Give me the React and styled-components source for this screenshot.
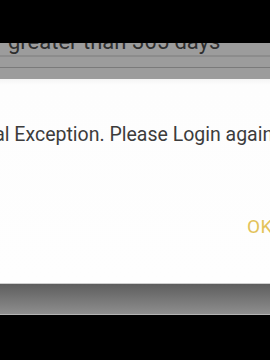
import React from "react";
import styled, { createGlobalStyle } from "styled-components";

const Global = createGlobalStyle`
  html, body { margin: 0; padding: 0; background: #000; overflow: hidden; }
  body { font-family: Roboto, "Noto Sans", Arial, sans-serif; }
`;

const Frame = styled.div`
  width: 100%;
  height: 360px;
  display: flex;
  flex-direction: column;
  background: #000;
  overflow: hidden;
`;

const Letterbox = styled.div`
  height: ${(p) => p.$h}px;
  flex: none;
  background: #000;
`;

const Backdrop = styled.div`
  height: 36px;
  flex: none;
  background: #9c9c9c;
  overflow: hidden;
  display: flex;
  flex-direction: column;
`;

const BackdropText = styled.div`
  margin-top: -14px;
  padding-left: 8px;
  font-size: 22px;
  line-height: 26px;
  height: 26px;
  color: #2e2e2e;
  white-space: nowrap;
`;

const Rule = styled.div`
  height: ${(p) => p.$h}px;
  flex: none;
  background: ${(p) => p.$c};
`;

const Spacer = styled.div`
  height: ${(p) => p.$h}px;
  flex: none;
`;

const Dialog = styled.div`
  height: 204px;
  flex: none;
  background: linear-gradient(#f4f4f4 0px, #fdfdfd 6px, #fefefe 100%);
  overflow: hidden;
  display: flex;
  flex-direction: column;
`;

const Message = styled.div`
  margin-top: 44px;
  margin-left: -56px;
  font-size: 19.5px;
  line-height: 24px;
  color: #3c3c3c;
  white-space: nowrap;
`;

const Actions = styled.div`
  margin-top: 68px;
  display: flex;
  justify-content: flex-end;
`;

const OkButton = styled.button`
  border: none;
  background: none;
  padding: 0;
  margin-right: -3px;
  font-family: inherit;
  font-size: 19px;
  line-height: 24px;
  color: #e3c35a;
  letter-spacing: 0.5px;
`;

const Band = styled.div`
  height: 32px;
  flex: none;
  display: flex;
  flex-direction: column;
`;

const BandFill = styled.div`
  flex: 1;
  background: linear-gradient(#5e5e5e, #8e8e8e);
`;

export default function App() {
  return (
    <>
      <Global />
      <Frame>
        <Letterbox $h={43} />
        <Backdrop>
          <BackdropText>greater than 365 days</BackdropText>
          <Rule $h={2} $c="#8c8c8c" />
          <Spacer $h={10} />
          <Rule $h={1} $c="#7a7a7a" />
        </Backdrop>
        <Dialog>
          <Message>Internal Exception. Please Login again</Message>
          <Actions>
            <OkButton>OK</OkButton>
          </Actions>
        </Dialog>
        <Band>
          <Rule $h={1} $c="#cfcfcf" />
          <BandFill />
          <Rule $h={1} $c="#b4b4b4" />
        </Band>
        <Letterbox $h={45} />
      </Frame>
    </>
  );
}
